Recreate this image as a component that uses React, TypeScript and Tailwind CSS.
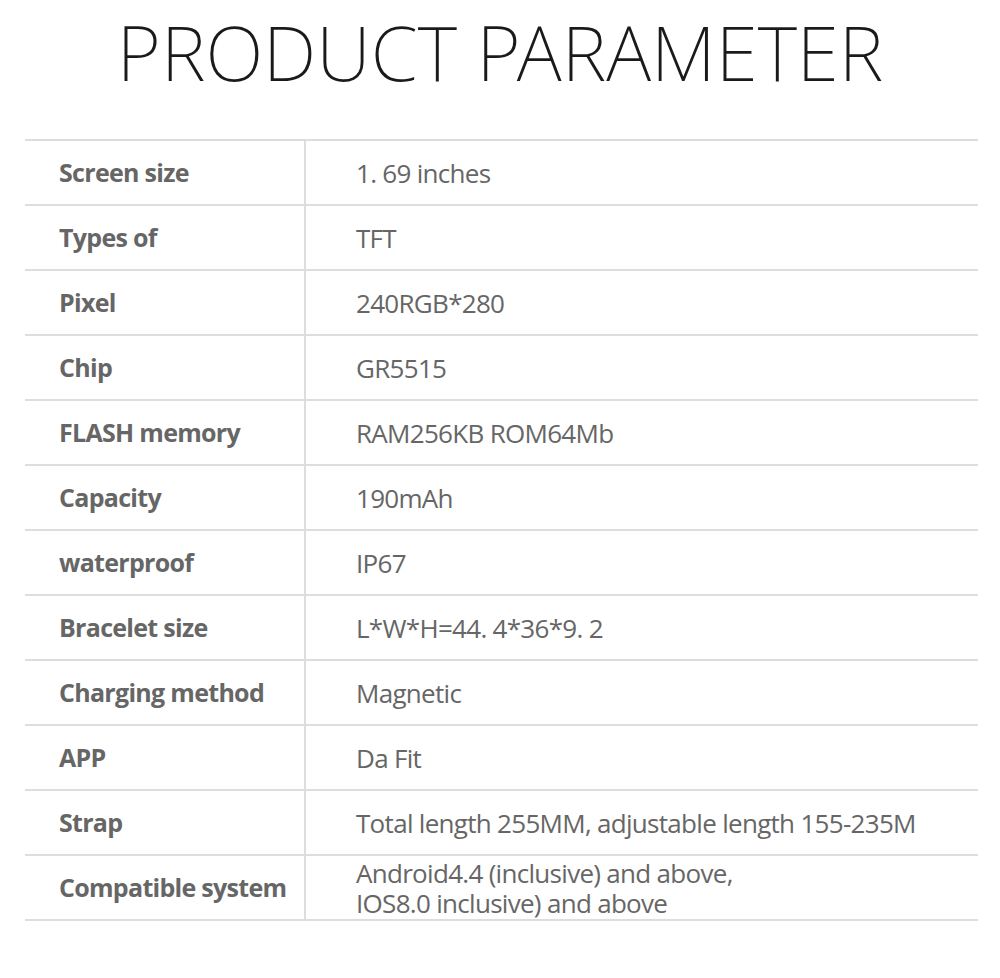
import React from 'react';

type Row = { label: string; value: string[] };

const rows: Row[] = [
  { label: 'Screen size', value: ['1. 69 inches'] },
  { label: 'Types of', value: ['TFT'] },
  { label: 'Pixel', value: ['240RGB*280'] },
  { label: 'Chip', value: ['GR5515'] },
  { label: 'FLASH memory', value: ['RAM256KB ROM64Mb'] },
  { label: 'Capacity', value: ['190mAh'] },
  { label: 'waterproof', value: ['IP67'] },
  { label: 'Bracelet size', value: ['L*W*H=44. 4*36*9. 2'] },
  { label: 'Charging method', value: ['Magnetic'] },
  { label: 'APP', value: ['Da Fit'] },
  { label: 'Strap', value: ['Total length 255MM, adjustable length 155-235M'] },
  { label: 'Compatible system', value: ['Android4.4 (inclusive) and above,', 'IOS8.0 inclusive) and above'] },
];

const App: React.FC = () => {
  return (
    <div className="w-[1000px] h-[978px] bg-white font-['Open_Sans',sans-serif] text-[#666666]">
      <h1 className="h-[139px] text-center text-[76px] leading-[104px] font-extralight text-[#1a1a1a] font-['Noto_Sans',sans-serif]">
        PRODUCT PARAMETER
      </h1>

      <div className="ml-[25px] w-[953px] border-t-2 border-[#dddddd]">
        {rows.map((row) => (
          <div key={row.label} className="flex h-[65px] border-b-2 border-[#dddddd]">
            <div className="w-[281px] shrink-0 border-r-2 border-[#dddddd] pl-[34px] flex items-center text-[25px] font-bold tracking-[-0.7px]">
              {row.label}
            </div>
            <div className="flex flex-col justify-center pl-[50px] text-[26px] leading-[30px] tracking-[-0.7px]">
              {row.value.map((v) => (
                <span key={v}>{v}</span>
              ))}
            </div>
          </div>
        ))}
      </div>
    </div>
  );
};

export default App;
